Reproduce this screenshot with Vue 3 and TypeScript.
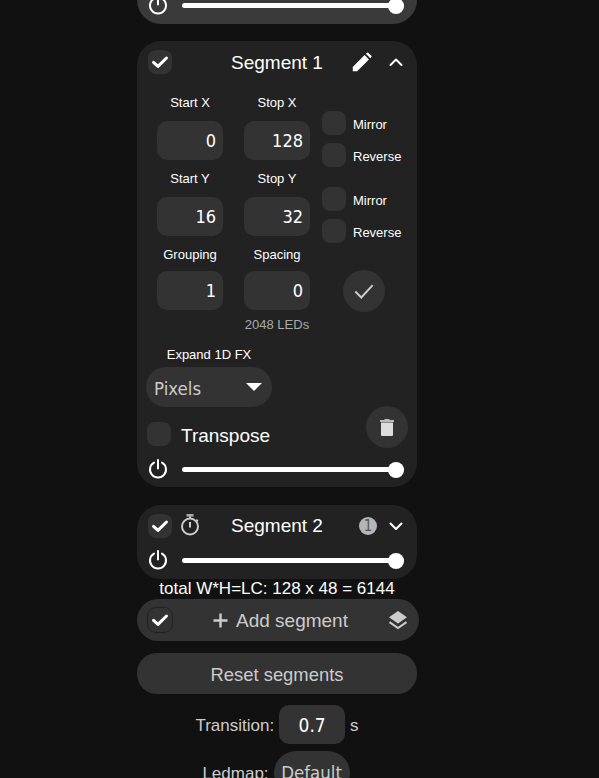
<script setup lang="ts">
interface Field {
  label: string
  value: number
}

const fields: Field[] = [
  { label: 'Start X', value: 0 },
  { label: 'Stop X', value: 128 },
  { label: 'Start Y', value: 16 },
  { label: 'Stop Y', value: 32 },
]
</script>

<template>
  <div class="page">
    <section class="card card-prev">
      <div class="power-row">
        <svg class="power" viewBox="0 0 20 20"><path d="M6 3.600a8 8 0 1 0 8 0M10 1v8.600" /></svg>
        <input class="slider" type="range" min="0" max="255" value="255" />
      </div>
    </section>

    <section class="card card-one">
      <header class="seg-head">
        <label class="check"><svg viewBox="0 0 24 24"><path d="M5.500 12.400l4.500 4 8.500-8.400" /></svg></label>
        <span class="seg-title">Segment 1</span>
        <svg class="pencil" viewBox="0 0 24 24"><path d="M2 22v-5L15.500 3.500l5 5L7 22zM17 2l1-1a1.400 1.400 0 0 1 2 0l3 3a1.400 1.400 0 0 1 0 2l-1 1z" /></svg>
        <svg class="chevron" viewBox="0 0 16 16"><path d="M2.500 11L8 5.500l5.500 5.500" /></svg>
      </header>

      <div class="fields">
        <div v-for="field in fields.slice(0, 2)" :key="field.label" class="field">
          <span class="field-label">{{ field.label }}</span>
          <input class="num" type="number" :value="field.value" />
        </div>
        <div class="opts">
          <label class="opt"><span class="check"></span><span class="opt-text">Mirror</span></label>
          <label class="opt"><span class="check"></span><span class="opt-text">Reverse</span></label>
        </div>
        <div v-for="field in fields.slice(2)" :key="field.label" class="field">
          <span class="field-label">{{ field.label }}</span>
          <input class="num" type="number" :value="field.value" />
        </div>
        <div class="opts">
          <label class="opt"><span class="check"></span><span class="opt-text">Mirror</span></label>
          <label class="opt"><span class="check"></span><span class="opt-text">Reverse</span></label>
        </div>
        <div class="field field-last">
          <span class="field-label">Grouping</span>
          <input class="num" type="number" value="1" />
        </div>
        <div class="field field-last">
          <span class="field-label">Spacing</span>
          <input class="num" type="number" value="0" />
          <span class="leds">2048 LEDs</span>
        </div>
        <button type="button" class="round round-apply">
          <svg viewBox="0 0 24 24"><path d="M4 12.500l5.500 5.500L20 6.500" /></svg>
        </button>
      </div>

      <div class="lower">
        <div class="lower-left">
          <span class="expand-label">Expand 1D FX</span>
          <div class="select">
            <span class="select-text">Pixels</span>
            <i class="caret"></i>
          </div>
          <label class="transpose"><span class="check"></span><span class="transpose-text">Transpose</span></label>
        </div>
        <button type="button" class="round round-trash">
          <svg class="trash" viewBox="0 0 14 18"><path class="lid" d="M0 2h4.500V1h5v1H14v2H0z" /><path d="M1 4.500h12V17a1 1 0 0 1-1 1H2a1 1 0 0 1-1-1z" /></svg>
        </button>
      </div>

      <div class="power-row">
        <svg class="power" viewBox="0 0 20 20"><path d="M6 3.600a8 8 0 1 0 8 0M10 1v8.600" /></svg>
        <input class="slider" type="range" min="0" max="255" value="255" />
      </div>
    </section>

    <section class="card card-two">
      <header class="seg-head">
        <label class="check"><svg viewBox="0 0 24 24"><path d="M5.500 12.400l4.500 4 8.500-8.400" /></svg></label>
        <svg class="timer" viewBox="0 0 20 24">
          <rect class="timer-cap" x="6.500" y="0" width="7" height="2.600" />
          <path d="M10 2.600v2.400M10 8v5.500M16.200 5.800l1.600 1.600" />
          <circle cx="10" cy="12.500" r="8" />
        </svg>
        <span class="seg-title">Segment 2</span>
        <span class="badge">1</span>
        <svg class="chevron" viewBox="0 0 16 16"><path d="M2.500 5.500L8 11l5.500-5.500" /></svg>
      </header>
      <div class="power-row">
        <svg class="power" viewBox="0 0 20 20"><path d="M6 3.600a8 8 0 1 0 8 0M10 1v8.600" /></svg>
        <input class="slider" type="range" min="0" max="255" value="255" />
      </div>
    </section>

    <p class="total">total W*H=LC: 128 x 48 = 6144</p>

    <div class="add-bar">
      <label class="check check-outline"><svg viewBox="0 0 24 24"><path d="M5.500 12.400l4.500 4 8.500-8.400" /></svg></label>
      <span class="add-label">
        <svg class="plus" viewBox="0 0 16 16"><path d="M8 .500v15M.500 8h15" /></svg>
        Add segment
      </span>
      <svg class="layers" viewBox="0 0 20 20"><path class="fill" d="M10 1l9 6.200-9 6.200-9-6.200z" /><path d="M1.500 12.200L10 18l8.500-5.800" /></svg>
    </div>

    <button type="button" class="reset">Reset segments</button>

    <div class="setting">
      <span class="setting-text">Transition:</span>
      <input class="num num-center" type="text" value="0.7" />
      <span class="setting-text">s</span>
    </div>
    <div class="setting setting-map">
      <span class="map-text">Ledmap:</span>
      <div class="map-select">Default</div>
    </div>
  </div>
</template>

<style>
html,
body {
  margin: 0;
  height: 100%;
  overflow: hidden;
  background: #111;
}
</style>

<style scoped>
.page {
  width: 282px;
  height: 778px;
  padding-left: 137px;
  overflow: hidden;
  color: #fff;
  font-family: "Liberation Sans", Arial, sans-serif;
}

.card {
  width: 280px;
  background: #222;
  border-radius: 24px;
  box-sizing: border-box;
}

.card-prev {
  height: 64px;
  margin-top: -40px;
  background: #3a3a3a;
  display: flex;
  align-items: flex-end;
  padding-bottom: 9px;
  margin-bottom: 17px;
}

.card-prev .power-row {
  margin-top: 0;
  flex: 1;
}

.card-one {
  height: 446px;
  padding-top: 9px;
  margin-bottom: 18px;
}

.card-two {
  height: 74px;
  padding-top: 9px;
}

.seg-head {
  position: relative;
  display: flex;
  align-items: center;
  height: 24px;
  padding-left: 11px;
}

.seg-title {
  position: absolute;
  left: 0;
  right: 0;
  padding-top: 2px;
  text-align: center;
  font-size: 19px;
  pointer-events: none;
}

.card-two .seg-title {
  padding-top: 0;
}

.check {
  display: block;
  flex: none;
  width: 24px;
  height: 24px;
  background: #333;
  border-radius: 8px;
}

.check svg {
  display: block;
  width: 24px;
  height: 24px;
  fill: none;
  stroke: #fff;
  stroke-width: 3;
  stroke-linecap: round;
  stroke-linejoin: round;
}

.pencil {
  width: 21px;
  height: 21px;
  margin-left: auto;
  fill: #fff;
}

.chevron {
  width: 16px;
  height: 16px;
  margin: 0 13px 0 16px;
  fill: none;
  stroke: #fff;
  stroke-width: 2;
  stroke-linecap: round;
  stroke-linejoin: round;
}

.timer {
  width: 20px;
  height: 24px;
  margin-left: 8px;
  fill: none;
  stroke: #ccc;
  stroke-width: 2;
}

.timer-cap {
  fill: #aaa;
  stroke: none;
}

.badge {
  width: 18px;
  height: 18px;
  margin-left: auto;
  border-radius: 50%;
  background: #b5b5b5;
  color: #555;
  font-family: "DejaVu Sans", sans-serif;
  font-stretch: condensed;
  font-size: 15px;
  line-height: 18px;
  text-align: center;
}

.badge + .chevron {
  margin-left: 11px;
}

.fields {
  display: grid;
  grid-template-columns: 66px 66px auto;
  grid-template-rows: 76px 76px auto;
  column-gap: 21px;
  padding-left: 20px;
  margin-top: 18px;
}

.field {
  display: flex;
  flex-direction: column;
  align-items: center;
}

.field-label {
  height: 20px;
  margin-bottom: 9px;
  font-size: 13px;
  line-height: 22px;
  white-space: nowrap;
}

.field-last .field-label {
  margin-bottom: 7px;
}

.num {
  box-sizing: border-box;
  width: 66px;
  height: 39px;
  padding: 0 7px;
  border: 0;
  border-radius: 10px;
  outline: none;
  background: #333;
  color: #fff;
  font-family: "DejaVu Sans", sans-serif;
  font-stretch: condensed;
  font-size: 18px;
  text-align: right;
  appearance: textfield;
}

.num::-webkit-inner-spin-button {
  appearance: none;
}

.num-center {
  padding: 0;
  font-size: 19px;
  text-align: center;
}

.leds {
  margin-top: 7px;
  color: #aaa;
  font-size: 13px;
  line-height: 16px;
  white-space: nowrap;
}

.opts {
  display: flex;
  flex-direction: column;
  gap: 8px;
  margin-left: -9px;
  padding-top: 19px;
}

.opt {
  display: flex;
  align-items: center;
  gap: 7px;
  font-size: 13px;
}

.opt-text {
  padding-top: 2px;
}

.round {
  width: 42px;
  height: 42px;
  padding: 0;
  border: 0;
  border-radius: 50%;
  background: #333;
  display: flex;
  align-items: center;
  justify-content: center;
}

.round svg {
  width: 26px;
  height: 26px;
  fill: none;
  stroke: #ccc;
  stroke-width: 1.800;
}

.round-apply {
  margin: 26px 0 0 12px;
}

.round-trash {
  margin-bottom: -1px;
}

.lower {
  display: flex;
  justify-content: space-between;
  align-items: flex-end;
  padding: 0 9px;
  margin-top: 14px;
}

.lower-left {
  display: flex;
  flex-direction: column;
}

.expand-label {
  width: 126px;
  font-size: 13px;
  line-height: 16px;
  text-align: center;
}

.select {
  box-sizing: border-box;
  display: flex;
  align-items: center;
  justify-content: space-between;
  width: 126px;
  height: 40px;
  margin-top: 4px;
  padding: 0 10px 0 8px;
  border-radius: 20px;
  background: #333;
  color: #ccc;
  font-family: "DejaVu Sans", sans-serif;
  font-stretch: condensed;
  font-size: 18.500px;
}

.select-text {
  padding-top: 2px;
}

.caret {
  width: 0;
  height: 0;
  border-left: 8px solid transparent;
  border-right: 8px solid transparent;
  border-top: 8px solid #fff;
}

.transpose {
  display: flex;
  align-items: center;
  gap: 10px;
  margin: 13px 0 0 1px;
  font-size: 19px;
}

.transpose-text {
  padding-top: 5px;
}

.round svg.trash {
  width: 14px;
  height: 18px;
  fill: #ddd;
  stroke: none;
}

.trash .lid {
  fill: #bbb;
}

.power-row {
  display: flex;
  align-items: center;
  gap: 14px;
  height: 20px;
  margin-top: 12px;
  padding-left: 11px;
}

.power {
  flex: none;
  width: 20px;
  height: 20px;
  fill: none;
  stroke: #fff;
  stroke-width: 2;
  stroke-linecap: round;
}

.slider {
  width: 222px;
  height: 16px;
  margin: 1px 0 0;
  appearance: none;
  background: transparent;
}

.slider::-webkit-slider-runnable-track {
  height: 5px;
  border-radius: 3px;
  background: #fff;
}

.slider::-webkit-slider-thumb {
  appearance: none;
  width: 16px;
  height: 16px;
  margin-top: -5.500px;
  border-radius: 50%;
  background: #fff;
}

.total {
  width: 280px;
  margin: 0;
  height: 20px;
  font-size: 17px;
  line-height: 20px;
  text-align: center;
  white-space: nowrap;
}

.add-bar {
  position: relative;
  box-sizing: border-box;
  display: flex;
  align-items: center;
  justify-content: space-between;
  width: 282px;
  height: 42px;
  padding: 0 11px 0 10px;
  border-radius: 21px;
  background: #333;
}

.check-outline {
  box-sizing: border-box;
  width: 26px;
  height: 26px;
  border: 1px solid #222;
  border-radius: 9px;
}

.add-label {
  position: absolute;
  left: 76px;
  padding-top: 1px;
  display: flex;
  align-items: center;
  gap: 8px;
  color: #ccc;
  font-size: 19px;
}

.plus {
  width: 15px;
  height: 15px;
  fill: none;
  stroke: #ccc;
  stroke-width: 2.600;
}

.layers {
  width: 20px;
  height: 20px;
  fill: none;
  stroke: #ccc;
  stroke-width: 2;
}

.layers .fill {
  fill: #ccc;
  stroke: none;
}

.reset {
  display: block;
  width: 280px;
  height: 41px;
  margin-top: 12px;
  padding: 3px 0 0;
  border: 0;
  border-radius: 20px;
  background: #333;
  color: #ccc;
  font-family: inherit;
  font-size: 18.400px;
}

.setting {
  display: flex;
  align-items: center;
  justify-content: center;
  gap: 5px;
  width: 280px;
  margin-top: 11px;
  color: #ccc;
  font-size: 17px;
}

.setting-text {
  padding-top: 2px;
}

.map-text {
  padding-top: 1px;
}

.setting-map {
  margin-top: 7px;
  padding-right: 2px;
  box-sizing: border-box;
}

.map-select {
  box-sizing: border-box;
  width: 76px;
  height: 44px;
  border-radius: 22px;
  background: #333;
  font-family: "DejaVu Sans", sans-serif;
  font-stretch: condensed;
  font-size: 18.500px;
  line-height: 44px;
  text-align: center;
}
</style>
